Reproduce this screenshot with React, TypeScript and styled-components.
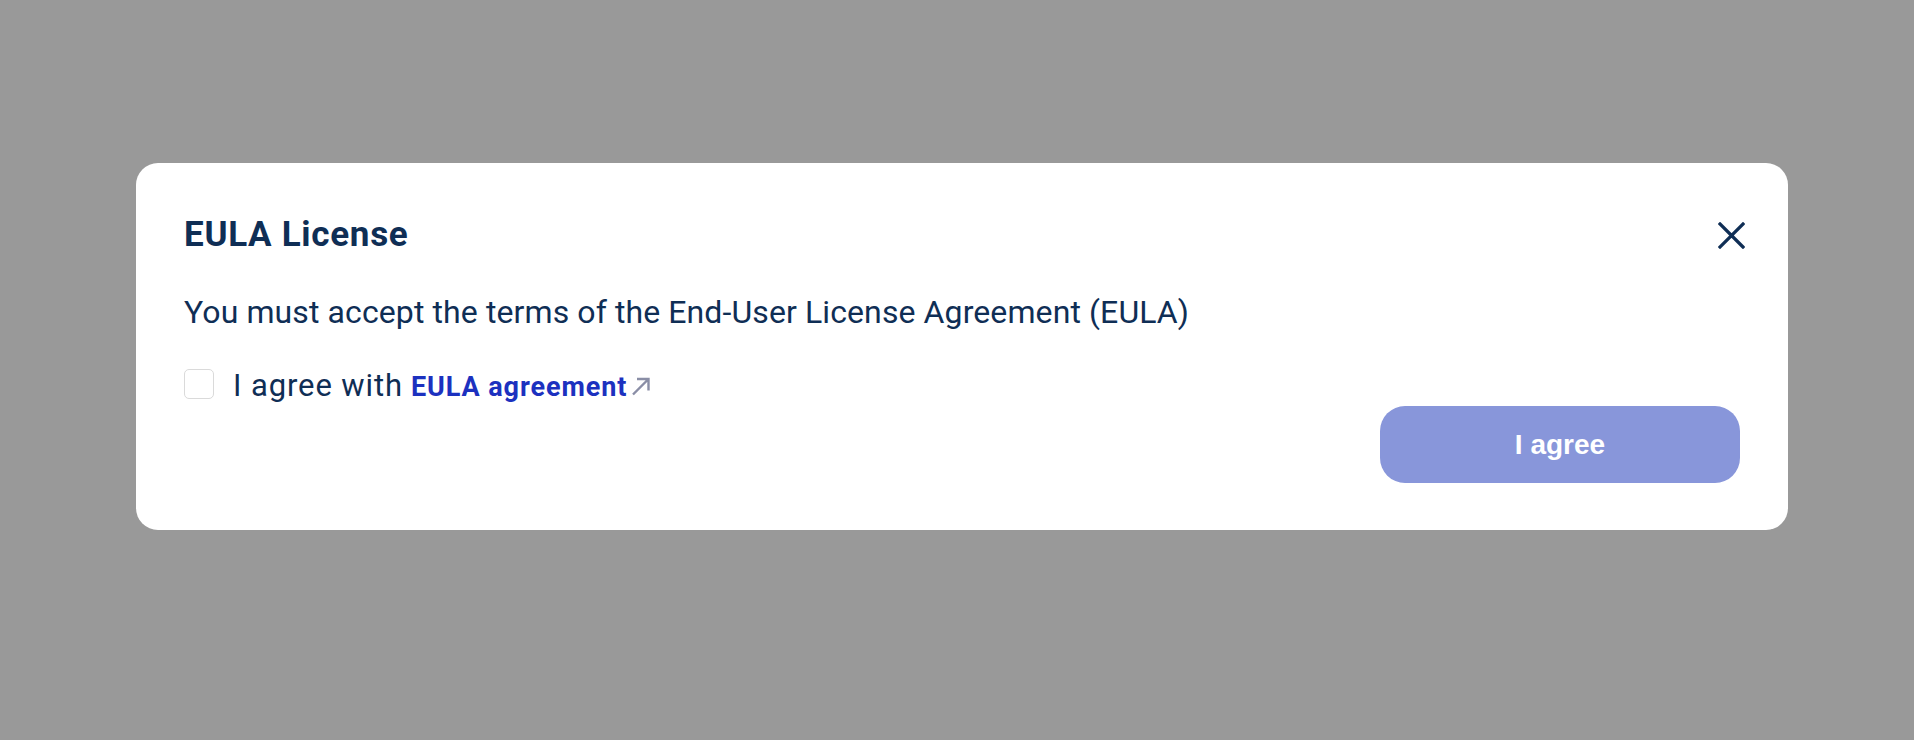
import React from "react";
import styled, { createGlobalStyle } from "styled-components";

const Global = createGlobalStyle`
  html, body { margin: 0; padding: 0; }
  body { background: #999999; font-family: Roboto, "Noto Sans", sans-serif; }
`;

const Backdrop = styled.div`
  min-height: 740px;
  box-sizing: border-box;
  padding: 163px 0 0 136px;
  background: #999999;
`;

const Modal = styled.div`
  width: 1652px;
  box-sizing: border-box;
  padding: 48px 48px 47px 48px;
  background: #ffffff;
  border-radius: 22px;
  display: flex;
  flex-direction: column;
`;

const Header = styled.div`
  display: flex;
  align-items: center;
  justify-content: space-between;
  height: 48px;
`;

const Title = styled.h2`
  margin: 0;
  font-family: Roboto, sans-serif;
  font-weight: 700;
  font-size: 35px;
  letter-spacing: 0.7px;
  line-height: 48px;
  color: #0f2e55;
`;

const CloseButton = styled.button`
  border: 0;
  background: none;
  padding: 0;
  margin-right: -5px;
  width: 27px;
  height: 27px;
  display: flex;
  cursor: pointer;
  color: #0f2e55;
`;

const Description = styled.p`
  margin: 33px 0 0 0;
  font-family: Roboto, sans-serif;
  font-size: 32px;
  letter-spacing: 0.1px;
  line-height: 40px;
  color: #0f2e55;
`;

const CheckRow = styled.label`
  margin-top: 34px;
  display: flex;
  align-items: center;
  gap: 19px;
  height: 40px;
  font-family: Roboto, sans-serif;
  font-size: 31px;
  letter-spacing: 0.9px;
  line-height: 40px;
  color: #0f2e55;
`;

const Box = styled.span`
  width: 30px;
  height: 30px;
  margin-bottom: 4px;
  box-sizing: border-box;
  border: 1.5px solid #dadada;
  border-radius: 5px;
  flex-shrink: 0;
`;

const Label = styled.span`
  display: flex;
  align-items: baseline;
  gap: 8px;
`;

const Link = styled.a`
  font-weight: 700;
  font-size: 27px;
  letter-spacing: 0.9px;
  color: #1c31bf;
  text-decoration: none;
  display: inline-flex;
  align-items: baseline;
  gap: 4px;
`;

const Arrow = styled.svg`
  width: 20px;
  height: 19px;
  color: #8a8ea6;
`;

const Footer = styled.div`
  display: flex;
  justify-content: flex-end;
`;

const AgreeButton = styled.button`
  width: 360px;
  height: 77px;
  border: 0;
  border-radius: 25px;
  background: #8896da;
  color: #ffffff;
  font-family: "Liberation Sans", Arial, sans-serif;
  font-weight: 700;
  font-size: 28px;
  cursor: not-allowed;
`;

export default function App() {
  return (
    <>
      <Global />
      <Backdrop>
        <Modal>
          <Header>
            <Title>EULA License</Title>
            <CloseButton aria-label="Close">
              <svg width="27" height="27" viewBox="0 0 27 27" fill="none">
                <path d="M2 2L25 25M25 2L2 25" stroke="currentColor" strokeWidth="3.2" strokeLinecap="square" />
              </svg>
            </CloseButton>
          </Header>
          <Description>
            You must accept the terms of the End-User License Agreement (EULA)
          </Description>
          <CheckRow>
            <Box />
            <Label>
              I agree with
              <Link href="#">
                EULA agreement
                <Arrow viewBox="0 0 20 19" fill="none">
                  <path d="M2 17.5L17.5 2M6 2H17.5V13.5" stroke="currentColor" strokeWidth="2.4" />
                </Arrow>
              </Link>
            </Label>
          </CheckRow>
          <Footer>
            <AgreeButton disabled>I agree</AgreeButton>
          </Footer>
        </Modal>
      </Backdrop>
    </>
  );
}
